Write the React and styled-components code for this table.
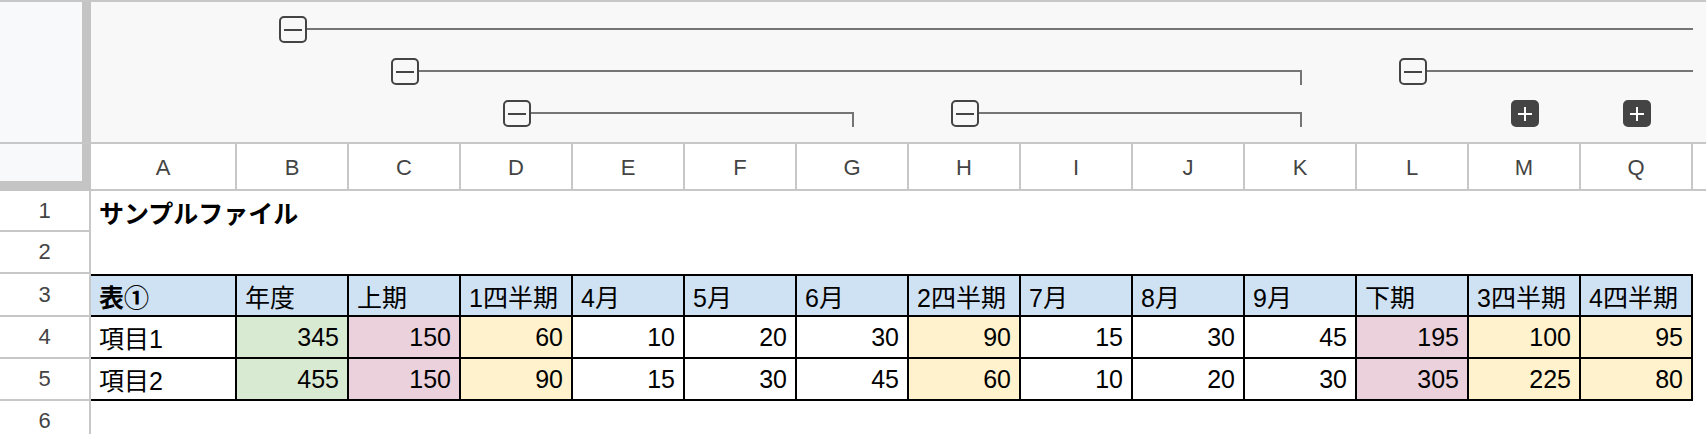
import React from 'react';
import styled, { createGlobalStyle } from 'styled-components';

const GlobalStyle = createGlobalStyle`
  html, body {
    margin: 0;
    padding: 0;
    background: #fff;
  }
  body {
    font-family: "Liberation Sans", "Noto Sans CJK JP", sans-serif;
    overflow: hidden;
  }
`;

// sheet column widths: A, B..Q, then the cut-off column at the right edge
const colTemplate = '146px repeat(13, 112px) 1fr';

const COLUMNS = ['A', 'B', 'C', 'D', 'E', 'F', 'G', 'H', 'I', 'J', 'K', 'L', 'M', 'Q'];

const FILL = {
  head: '#cfe2f3',
  green: '#d9ead3',
  pink: '#ead1dc',
  yellow: '#fff2cc',
};

// fill per column B..Q (index 0 = A)
const colFill = [null, 'green', 'pink', 'yellow', null, null, null, 'yellow', null, null, null, 'pink', 'yellow', 'yellow'];

const headers = ['表①', '年度', '上期', '1四半期', '4月', '5月', '6月', '2四半期', '7月', '8月', '9月', '下期', '3四半期', '4四半期'];

const rows = [
  { no: 4, label: '項目1', values: [345, 150, 60, 10, 20, 30, 90, 15, 30, 45, 195, 100, 95] },
  { no: 5, label: '項目2', values: [455, 150, 90, 15, 30, 45, 60, 10, 20, 30, 305, 225, 80] },
];

// outline groups: grid column start / end (1 = A), level row, open = continues off screen
const groups = [
  { from: 2, to: 15, level: 1, open: true },
  { from: 3, to: 12, level: 2 },
  { from: 12, to: 15, level: 2, open: true },
  { from: 4, to: 8, level: 3 },
  { from: 8, to: 12, level: 3 },
];

const collapsed = [13, 14];

const Page = styled.div`
  width: 1706px;
  height: 434px;
  overflow: hidden;
  display: flex;
  flex-direction: column;
`;

const GroupBand = styled.div`
  display: flex;
  height: 144px;
  flex-shrink: 0;
  box-sizing: border-box;
  border-top: 2px solid #c7c7c7;
  border-bottom: 2px solid #c7c7c7;
  background: #f8f8f8;
`;

const FrozenPane = styled.div`
  width: 82px;
  flex-shrink: 0;
  background: #f8f9fa;
  border-right: 9px solid #c4c4c4;
`;

const GroupLevels = styled.div`
  flex: 1;
  display: grid;
  grid-template-columns: ${colTemplate};
  grid-template-rows: repeat(3, 42px);
  padding-top: 6px;
`;

const Bracket = styled.div`
  grid-column: ${(p) => p.$from} / ${(p) => p.$to};
  grid-row: ${(p) => p.$level};
  display: flex;
  align-items: flex-start;
  padding-left: 42px;
  margin-right: ${(p) => (p.$open ? 0 : 55)}px;
`;

const ToggleBox = styled.span`
  width: 28px;
  height: 27px;
  margin-top: 8px;
  box-sizing: border-box;
  border: 2px solid #444;
  border-radius: 5px;
  flex-shrink: 0;
  display: flex;
  align-items: center;
  justify-content: center;
  background: ${(p) => (p.$collapsed ? '#444' : 'transparent')};
  position: relative;

  &::before,
  &::after {
    content: '';
    position: absolute;
    background: ${(p) => (p.$collapsed ? '#fff' : '#444')};
  }
  &::before {
    width: ${(p) => (p.$collapsed ? 14 : 18)}px;
    height: 2px;
  }
  &::after {
    width: 2px;
    height: 14px;
    display: ${(p) => (p.$collapsed ? 'block' : 'none')};
  }
`;

const BracketLine = styled.span`
  flex: 1;
  margin-top: 20px;
  height: 13px;
  border-top: 2px solid #757575;
  border-right: ${(p) => (p.$open ? 'none' : '2px solid #757575')};
`;

const CollapsedSlot = styled.div`
  grid-column: ${(p) => p.$col};
  grid-row: 3;
  display: flex;
  justify-content: center;
`;

const HeaderRow = styled.div`
  display: flex;
  height: 47px;
  flex-shrink: 0;
`;

const Corner = styled.div`
  width: 82px;
  height: 37px;
  flex-shrink: 0;
  background: #f8f9fa;
  border-right: 9px solid #c4c4c4;
  border-bottom: 10px solid #c4c4c4;
`;

const ColumnHeads = styled.div`
  flex: 1;
  display: grid;
  grid-template-columns: ${colTemplate};
`;

const ColHead = styled.div`
  box-sizing: border-box;
  border-right: ${(p) => (p.$last ? 'none' : '2px solid #c7c7c7')};
  border-bottom: 2px solid #c7c7c7;
  background: #fff;
  display: flex;
  align-items: center;
  justify-content: center;
  padding-top: 2px;
  font-size: 22px;
  color: #444;
`;

const SheetRow = styled.div`
  display: flex;
  height: ${(p) => p.$h}px;
  flex-shrink: 0;
`;

const RowHead = styled.div`
  width: 91px;
  flex-shrink: 0;
  box-sizing: border-box;
  border-right: 2px solid #c7c7c7;
  border-bottom: 2px solid #c7c7c7;
  display: flex;
  align-items: center;
  justify-content: center;
  font-size: 22px;
  color: #444;
  background: #fff;
`;

const Cells = styled.div`
  flex: 1;
  display: grid;
  grid-template-columns: ${colTemplate};
`;

const TitleCell = styled.div`
  grid-column: 1 / -1;
  padding-left: 8px;
  display: flex;
  align-items: center;
  font-size: 25px;
  font-weight: 700;
  color: #000;
`;

const Cell = styled.div`
  box-sizing: border-box;
  padding: 0 8px;
  display: flex;
  align-items: center;
  justify-content: ${(p) => (p.$num ? 'flex-end' : 'flex-start')};
  background: ${(p) => (p.$fill ? FILL[p.$fill] : '#fff')};
  border-right: 2px solid #000;
  border-bottom: 2px solid #000;
  border-top: ${(p) => (p.$top ? '2px solid #000' : 'none')};
  font-size: 25px;
  font-weight: ${(p) => (p.$bold ? 700 : 400)};
  color: #000;
  white-space: nowrap;
`;

const App = () => {
  return (
    <Page>
      <GlobalStyle />
      <GroupBand>
        <FrozenPane />
        <GroupLevels>
          {groups.map((g, i) => (
            <Bracket key={i} $from={g.from} $to={g.to} $level={g.level} $open={g.open}>
              <ToggleBox />
              <BracketLine $open={g.open} />
            </Bracket>
          ))}
          {collapsed.map((c) => (
            <CollapsedSlot key={c} $col={c}>
              <ToggleBox $collapsed />
            </CollapsedSlot>
          ))}
        </GroupLevels>
      </GroupBand>

      <HeaderRow>
        <Corner />
        <ColumnHeads>
          {COLUMNS.map((c) => (
            <ColHead key={c}>{c}</ColHead>
          ))}
          <ColHead $last />
        </ColumnHeads>
      </HeaderRow>

      <SheetRow $h={41}>
        <RowHead>1</RowHead>
        <Cells>
          <TitleCell>サンプルファイル</TitleCell>
        </Cells>
      </SheetRow>

      <SheetRow $h={42}>
        <RowHead>2</RowHead>
        <Cells />
      </SheetRow>

      <SheetRow $h={43}>
        <RowHead>3</RowHead>
        <Cells>
          {headers.map((h, i) => (
            <Cell key={h} $fill="head" $top $bold={i === 0}>
              {h}
            </Cell>
          ))}
        </Cells>
      </SheetRow>

      {rows.map((r) => (
        <SheetRow key={r.no} $h={42}>
          <RowHead>{r.no}</RowHead>
          <Cells>
            <Cell>{r.label}</Cell>
            {r.values.map((v, i) => (
              <Cell key={i} $num $fill={colFill[i + 1]}>
                {v}
              </Cell>
            ))}
          </Cells>
        </SheetRow>
      ))}

      <SheetRow $h={42}>
        <RowHead>6</RowHead>
        <Cells />
      </SheetRow>
    </Page>
  );
};

export default App;
